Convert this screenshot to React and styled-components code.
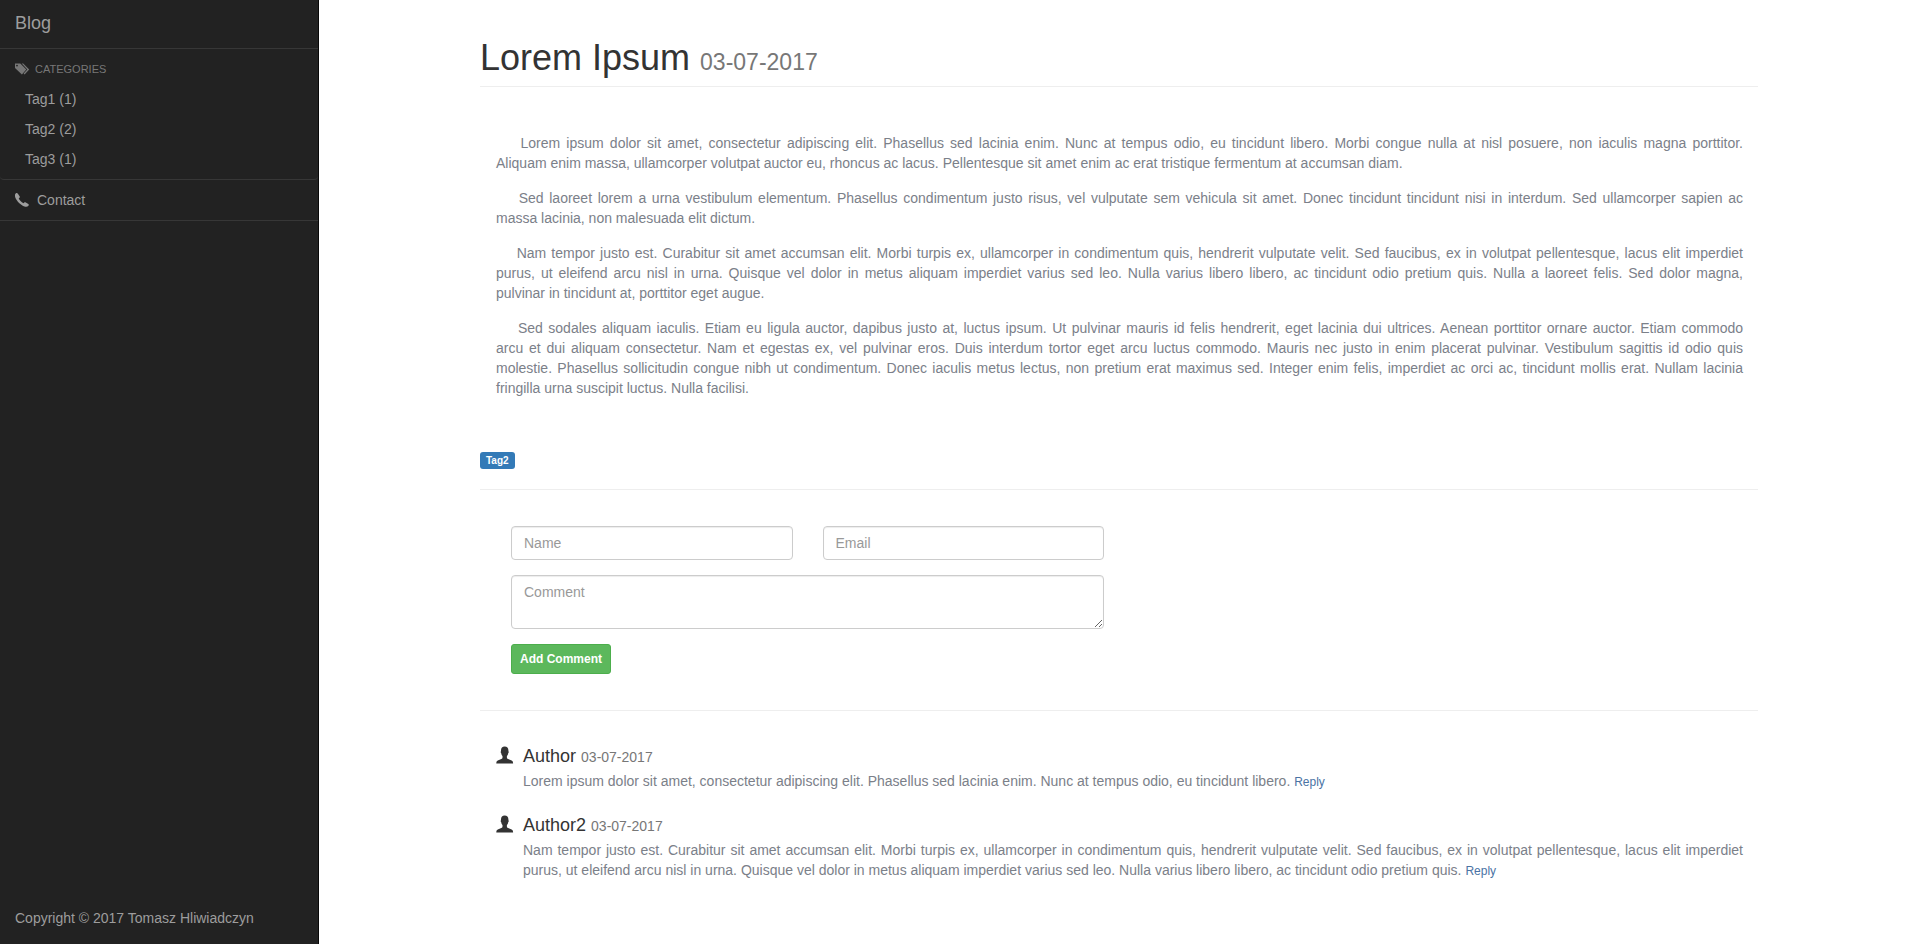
import React from "react";
import styled, { createGlobalStyle } from "styled-components";

const GlobalStyle = createGlobalStyle`
  *, *::before, *::after { box-sizing: border-box; }
  body {
    margin: 0;
    background: #fff;
    color: #333;
    font: 14px/20px "Liberation Sans", Arial, sans-serif;
  }
  a { text-decoration: none; }
`;

const Page = styled.div`
  display: grid;
  grid-template-columns: minmax(0, 1fr) minmax(0, 5fr);
  min-height: 100vh;
`;

const Sidebar = styled.nav`
  display: flex;
  flex-direction: column;
  background: #222;
  border-right: 1px solid #080808;
  color: #9d9d9d;
`;

const Brand = styled.a`
  padding: 13px 15px 15px;
  border-bottom: 1px solid #373737;
  color: #9d9d9d;
  font-size: 18px;
`;

const Categories = styled.section`
  padding: 10px 15px 5px;
  border-bottom: 1px solid #373737;
  border-radius: 0 0 4px 4px;
`;

const CategoryTitle = styled.h2`
  display: flex;
  align-items: center;
  gap: 5px;
  margin: 0 0 5px;
  color: #777;
  font-size: 11px;
  font-weight: 400;
  line-height: 20px;
  text-transform: uppercase;
`;

const CategoryList = styled.ul`
  margin: 0;
  padding: 0;
  list-style: none;
`;

const CategoryLink = styled.a`
  display: block;
  padding: 5px 10px;
  color: #9d9d9d;
`;

const ContactLink = styled.a`
  display: flex;
  align-items: center;
  gap: 8px;
  padding: 10px 15px;
  border-bottom: 1px solid #373737;
  color: #9d9d9d;
`;

const Copyright = styled.footer`
  margin-top: auto;
  padding: 16px 15px;
`;

const Icon = styled.svg`
  flex: none;
  width: ${(p) => p.$size}px;
  height: ${(p) => p.$size}px;
  fill: currentColor;
`;

const Main = styled.main`
  padding: 38px 156px 40px 161px;
`;

const PostHeader = styled.header`
  padding-bottom: 8px;
  border-bottom: 1px solid #eee;
`;

const PostTitle = styled.h1`
  margin: 0;
  font-size: 36px;
  font-weight: 400;
  line-height: 40px;
`;

const TitleDate = styled.small`
  color: #777;
  font-size: 23px;
  line-height: 1;
`;

const PostBody = styled.div`
  padding: 46px 15px 54px 16px;
`;

const Paragraph = styled.p`
  margin: 0 0 15px;
  color: #7b8089;
  text-align: justify;
  &:last-child { margin-bottom: 0; }
`;

const Line = styled.span`
  display: block;
  text-align-last: justify;
  &:last-child { text-align-last: start; }
`;

const Tags = styled.div`
  display: flex;
  padding-bottom: 20px;
  border-bottom: 1px solid #eee;
`;

const Tag = styled.a`
  padding: 3px 6px;
  border-radius: 3px;
  background: #337ab7;
  color: #fff;
  font-size: 10px;
  font-weight: 700;
  line-height: 11px;
`;

const FormSection = styled.section`
  padding: 36px 0;
  border-bottom: 1px solid #eee;
`;

const CommentForm = styled.form`
  display: grid;
  grid-template-columns: 1fr 1fr;
  gap: 15px 30px;
  width: 50%;
  padding: 0 15px 0 31px;
`;

const Field = styled.input`
  width: 100%;
  height: 34px;
  padding: 6px 12px;
  border: 1px solid #ccc;
  border-radius: 4px;
  background: #fff;
  box-shadow: inset 0 1px 1px rgba(0, 0, 0, 0.075);
  color: #555;
  font: inherit;
  &::placeholder { color: #999; opacity: 1; }
`;

const CommentField = styled(Field)`
  display: block;
  grid-column: 1 / -1;
  height: 54px;
  resize: vertical;
`;

const SubmitButton = styled.button`
  justify-self: start;
  padding: 5px 8px;
  border: 1px solid #4cae4c;
  border-radius: 3px;
  background: #5cb85c;
  color: #fff;
  font: 700 12px/18px "Liberation Sans", Arial, sans-serif;
`;

const Comments = styled.section`
  display: flex;
  flex-direction: column;
  gap: 24px;
  padding: 35px 15px 0 16px;
`;

const Comment = styled.article`
  display: grid;
  grid-template-columns: 18px minmax(0, 1fr);
  column-gap: 9px;
`;

const Author = styled.h4`
  margin: 0 0 5px;
  font-size: 18px;
  font-weight: 400;
  line-height: 20px;
`;

const CommentDate = styled.small`
  color: #777;
  font-size: 14px;
  line-height: 1;
`;

const CommentText = styled.p`
  margin: 0;
  color: #7b8089;
  text-align: justify;
`;

const Reply = styled.a`
  color: #4a73a4;
  font-size: 12px;
  line-height: 1;
`;

const TagsIcon = () => (
  <Icon $size={15} viewBox="0 0 15 15" aria-hidden="true">
    <path fillRule="evenodd" d="M0 1.500h5.300l6 6.100-4.400 4.900L0 6zM2 2.700a.9.900 0 1 0 0 1.800.9.900 0 0 0 0-1.800z" />
    <path d="M6.700 1.500h1.500l6 6.100-4.600 4.900-1-1 3.700-3.900z" />
  </Icon>
);

const PhoneIcon = () => (
  <Icon $size={14} viewBox="0 0 14 14" aria-hidden="true">
    <path d="M.7.4C1.400-.2 2.400-.1 2.900.7l1.700 2.600c.4.6.2 1.200-.3 1.600l-.6.5c.6 1.600 3.300 4.300 4.900 4.900l.6-.7c.4-.5 1-.6 1.600-.2l2.500 1.600c.6.400.7 1 .3 1.600-1 1.200-2.500 1.500-4.100.9C5.800 12.100 1.800 8.200.300 4.400-.3 2.900-.2 1.300.7.400z" />
  </Icon>
);

const UserIcon = () => (
  <Icon $size={18} viewBox="0 0 18 18" aria-hidden="true">
    <path d="M5 5.200C4.800 1.900 6.200.600 8.700.600s3.900 1.300 3.700 4.600c.5.200.4 1.500-.2 2-.2 1.300-.6 2.200-1.300 2.900v1.400c0 .8.4 1.100 1.200 1.500l3.500 1.500c1.100.5 1.500 1.200 1.500 3.100H.300c0-1.900.4-2.600 1.500-3.100L5.300 13c.8-.4 1.200-.7 1.200-1.500v-1.400c-.7-.7-1.100-1.600-1.300-2.900-.6-.5-.7-1.800-.2-2z" />
  </Icon>
);

const indent = "\u00a0".repeat(4);

const categories = ["Tag1 (1)", "Tag2 (2)", "Tag3 (1)"];

const paragraphs = [
  [
    "Lorem ipsum dolor sit amet, consectetur adipiscing elit. Phasellus sed lacinia enim. Nunc at tempus odio, eu tincidunt libero. Morbi congue nulla at nisl posuere, non iaculis magna porttitor.",
    "Aliquam enim massa, ullamcorper volutpat auctor eu, rhoncus ac lacus. Pellentesque sit amet enim ac erat tristique fermentum at accumsan diam.",
  ],
  [
    "Sed laoreet lorem a urna vestibulum elementum. Phasellus condimentum justo risus, vel vulputate sem vehicula sit amet. Donec tincidunt tincidunt nisi in interdum. Sed ullamcorper sapien ac",
    "massa lacinia, non malesuada elit dictum.",
  ],
  [
    "Nam tempor justo est. Curabitur sit amet accumsan elit. Morbi turpis ex, ullamcorper in condimentum quis, hendrerit vulputate velit. Sed faucibus, ex in volutpat pellentesque, lacus elit imperdiet",
    "purus, ut eleifend arcu nisl in urna. Quisque vel dolor in metus aliquam imperdiet varius sed leo. Nulla varius libero libero, ac tincidunt odio pretium quis. Nulla a laoreet felis. Sed dolor magna,",
    "pulvinar in tincidunt at, porttitor eget augue.",
  ],
  [
    "Sed sodales aliquam iaculis. Etiam eu ligula auctor, dapibus justo at, luctus ipsum. Ut pulvinar mauris id felis hendrerit, eget lacinia dui ultrices. Aenean porttitor ornare auctor. Etiam commodo",
    "arcu et dui aliquam consectetur. Nam et egestas ex, vel pulvinar eros. Duis interdum tortor eget arcu luctus commodo. Mauris nec justo in enim placerat pulvinar. Vestibulum sagittis id odio quis",
    "molestie. Phasellus sollicitudin congue nibh ut condimentum. Donec iaculis metus lectus, non pretium erat maximus sed. Integer enim felis, imperdiet ac orci ac, tincidunt mollis erat. Nullam lacinia",
    "fringilla urna suscipit luctus. Nulla facilisi.",
  ],
];

const comments = [
  {
    author: "Author",
    text: "Lorem ipsum dolor sit amet, consectetur adipiscing elit. Phasellus sed lacinia enim. Nunc at tempus odio, eu tincidunt libero.",
  },
  {
    author: "Author2",
    text: "Nam tempor justo est. Curabitur sit amet accumsan elit. Morbi turpis ex, ullamcorper in condimentum quis, hendrerit vulputate velit. Sed faucibus, ex in volutpat pellentesque, lacus elit imperdiet purus, ut eleifend arcu nisl in urna. Quisque vel dolor in metus aliquam imperdiet varius sed leo. Nulla varius libero libero, ac tincidunt odio pretium quis.",
  },
];

export default function App() {
  return (
    <>
      <GlobalStyle />
      <Page>
        <Sidebar>
          <Brand href="#">Blog</Brand>
          <Categories>
            <CategoryTitle><TagsIcon />Categories</CategoryTitle>
            <CategoryList>
              {categories.map((name) => (
                <li key={name}><CategoryLink href="#">{name}</CategoryLink></li>
              ))}
            </CategoryList>
          </Categories>
          <ContactLink href="#"><PhoneIcon />Contact</ContactLink>
          <Copyright>Copyright © 2017 Tomasz Hliwiadczyn</Copyright>
        </Sidebar>
        <Main>
          <PostHeader>
            <PostTitle>Lorem Ipsum <TitleDate>03-07-2017</TitleDate></PostTitle>
          </PostHeader>
          <PostBody>
            {paragraphs.map((lines) => (
              <Paragraph key={lines[0]}>
                {lines.map((line, i) => (
                  <Line key={line}>{i === 0 ? indent + line : line}</Line>
                ))}
              </Paragraph>
            ))}
          </PostBody>
          <Tags><Tag href="#">Tag2</Tag></Tags>
          <FormSection>
            <CommentForm onSubmit={(e) => e.preventDefault()}>
              <Field type="text" placeholder="Name" aria-label="Name" />
              <Field type="email" placeholder="Email" aria-label="Email" />
              <CommentField as="textarea" placeholder="Comment" aria-label="Comment" />
              <SubmitButton type="submit">Add Comment</SubmitButton>
            </CommentForm>
          </FormSection>
          <Comments>
            {comments.map(({ author, text }) => (
              <Comment key={author}>
                <UserIcon />
                <div>
                  <Author>{author} <CommentDate>03-07-2017</CommentDate></Author>
                  <CommentText>{text} <Reply href="#">Reply</Reply></CommentText>
                </div>
              </Comment>
            ))}
          </Comments>
        </Main>
      </Page>
    </>
  );
}
